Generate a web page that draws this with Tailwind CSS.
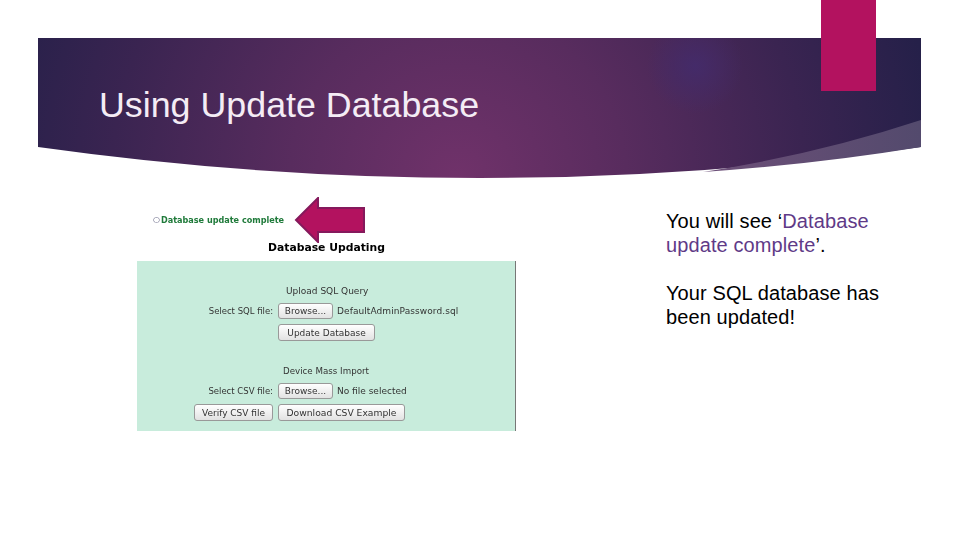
<!DOCTYPE html>
<html><head><meta charset="utf-8"><script src="https://cdn.jsdelivr.net/npm/@tailwindcss/browser@4"></script></head>
<body class="bg-white">
<div class="relative w-[960px] h-[540px] overflow-hidden bg-white font-['Liberation_Sans',Arial,sans-serif]">
  <header class="relative mt-[38px] ml-[38px] w-[883px] h-[140px]">
    <svg class="absolute inset-0" width="883" height="140" viewBox="0 0 883 140">
      <defs>
        <radialGradient id="g" gradientUnits="userSpaceOnUse" cx="420" cy="140" r="480">
          <stop offset="0" stop-color="#70326a"/><stop offset="0.35" stop-color="#582c5e"/><stop offset="0.72" stop-color="#3a2451"/><stop offset="1" stop-color="#252049"/>
        </radialGradient>
        <radialGradient id="s" gradientUnits="userSpaceOnUse" cx="657" cy="28" r="48">
          <stop offset="0" stop-color="#442b6a" stop-opacity="0.95"/><stop offset="1" stop-color="#442b6a" stop-opacity="0"/>
        </radialGradient>
        <linearGradient id="w" gradientUnits="userSpaceOnUse" x1="665" y1="0" x2="883" y2="0">
          <stop offset="0" stop-color="#6d4f78"/><stop offset="1" stop-color="#534a6d"/>
        </linearGradient>
      </defs>
      <path d="M0 0H883V109Q442 171 0 109Z" fill="url(#g)"/>
      <path d="M0 0H883V109Q442 171 0 109Z" fill="url(#s)"/>
      <path d="M665 134Q780 116 883 82V109Q780 126 665 134Z" fill="url(#w)"/>
    </svg>
    <h1 class="relative pl-[61px] pt-[48px] text-[35.8px] leading-[38px] text-[#f4ecf5]">Using Update Database</h1>
  </header>
  <div class="absolute top-0 left-[821px] w-[55px] h-[91px] bg-[#b3125f]"></div>

  <main class="flex items-start">
    <section class="ml-[137px] mt-[20px] w-[379px] shrink-0 font-['DejaVu_Sans',sans-serif] text-[#333] blur-[0.5px]">
      <div class="flex items-center h-[44px] pl-[16px]">
        <span class="w-[8px] text-[8px] text-[#557]">&#9675;</span>
        <span class="w-[133px] text-[8.1px] font-bold text-[#1f7a3a] whitespace-nowrap">Database update complete</span>
        <svg class="shrink-0" width="72" height="46" viewBox="0 0 72 46"><path d="M2 23L24 1V11H70V35H24V45Z" fill="#b3125f" stroke="#85195c" stroke-width="2"/></svg>
      </div>
      <h2 class="h-[19px] text-center text-[10.8px] leading-[12px] font-bold text-black">Database Updating</h2>
      <div class="h-[170px] bg-[#c8ecdc] border-r border-[#777] pt-[22px] text-[9px] leading-[16px]">
        <p class="h-[16px] pl-[149px]">Upload SQL Query</p>
        <div class="mt-[4px] flex h-[16px] items-center">
          <span class="w-[136px] text-right text-[8.5px]">Select SQL file:</span>
          <span class="ml-[5px] w-[55px] h-[16px] flex items-center justify-center bg-linear-to-b from-white to-[#e2e2e2] border border-[#999] rounded-[3px]">Browse...</span>
          <span class="ml-[4px] tracking-[0.08px]">DefaultAdminPassword.sql</span>
        </div>
        <div class="mt-[5px] ml-[141px] w-[97px] h-[17px] flex items-center justify-center bg-linear-to-b from-white to-[#e2e2e2] border border-[#999] rounded-[3px]">Update Database</div>
        <p class="mt-[22px] h-[16px] pl-[146px] text-[8.7px]">Device Mass Import</p>
        <div class="mt-[4px] flex h-[16px] items-center">
          <span class="w-[136px] text-right text-[8.5px]">Select CSV file:</span>
          <span class="ml-[5px] w-[55px] h-[16px] flex items-center justify-center bg-linear-to-b from-white to-[#e2e2e2] border border-[#999] rounded-[3px]">Browse...</span>
          <span class="ml-[4px]">No file selected</span>
        </div>
        <div class="mt-[5px] flex h-[17px]">
          <span class="ml-[57px] w-[79px] flex items-center justify-center bg-linear-to-b from-white to-[#e2e2e2] border border-[#999] rounded-[3px]">Verify CSV file</span>
          <span class="ml-[5px] w-[127px] flex items-center justify-center bg-linear-to-b from-white to-[#e2e2e2] border border-[#999] rounded-[3px] text-[9.2px]">Download CSV Example</span>
        </div>
      </div>
    </section>
    <section class="ml-[150px] mt-[31px] w-[225px] text-[20px] leading-[24px] tracking-[0.1px] text-black">
      <p>You will see ‘<span class="text-[#5f3a87]">Database update complete</span>’.</p>
      <p class="mt-[24px]">Your SQL database has been updated!</p>
    </section>
  </main>
</div>
</body></html>
